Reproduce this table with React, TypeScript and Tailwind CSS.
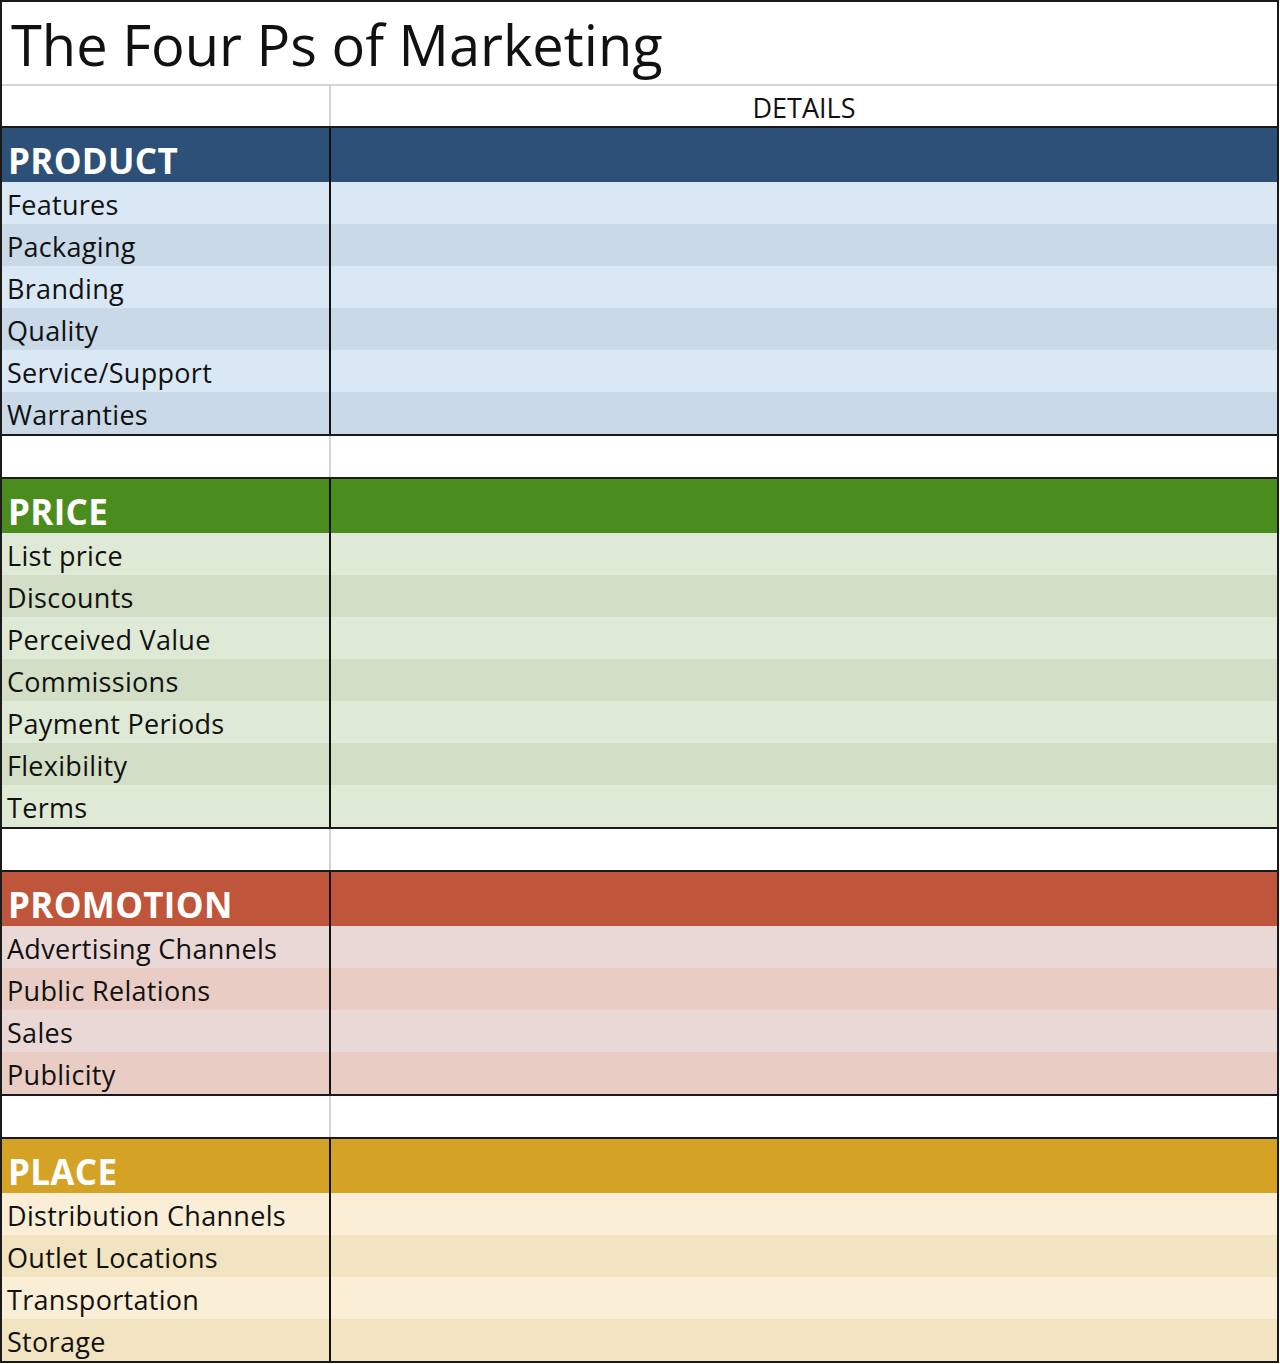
const sections = [
  {
    name: 'PRODUCT',
    head: 'bg-[#2c5077]',
    light: 'bg-[#dae8f5]',
    dark: 'bg-[#c9d9e7]',
    items: ['Features', 'Packaging', 'Branding', 'Quality', 'Service/Support', 'Warranties'],
  },
  {
    name: 'PRICE',
    head: 'bg-[#4a8c1e]',
    light: 'bg-[#dfead6]',
    dark: 'bg-[#d2dfc6]',
    items: ['List price', 'Discounts', 'Perceived Value', 'Commissions', 'Payment Periods', 'Flexibility', 'Terms'],
  },
  {
    name: 'PROMOTION',
    head: 'bg-[#bf553a]',
    light: 'bg-[#ead8d6]',
    dark: 'bg-[#e9ccc3]',
    items: ['Advertising Channels', 'Public Relations', 'Sales', 'Publicity'],
  },
  {
    name: 'PLACE',
    head: 'bg-[#d4a326]',
    light: 'bg-[#fbeed6]',
    dark: 'bg-[#f2e4c0]',
    items: ['Distribution Channels', 'Outlet Locations', 'Transportation', 'Storage'],
  },
]

function BlankRow() {
  return (
    <div className="flex h-[43px] border-t-2 border-[#1a1a1a] bg-white">
      <div className="w-[329px] border-r-2 border-[#d4d4d4]" />
      <div className="flex-1" />
    </div>
  )
}

function Section({ s }: { s: (typeof sections)[number] }) {
  return (
    <div className="border-t-2 border-[#1a1a1a]">
      <div className={`flex h-[54px] ${s.head}`}>
        <div className="flex w-[329px] items-end border-r-2 border-[#111] pb-[4px] pl-[6px] text-[35px] font-bold leading-none tracking-[0.3px] text-white">
          {s.name}
        </div>
        <div className="flex-1" />
      </div>
      {s.items.map((item, i) => (
        <div key={item} className={`flex h-[42px] ${i % 2 === 0 ? s.light : s.dark}`}>
          <div className="flex w-[329px] items-end border-r-2 border-[#111] pb-[6px] pl-[5px] text-[27px] leading-none tracking-[0.3px] text-[#111]">
            {item}
          </div>
          <div className="flex-1" />
        </div>
      ))}
    </div>
  )
}

export default function App() {
  return (
    <div className="w-[1280px] bg-white" style={{ fontFamily: '"Open Sans", Lato, sans-serif' }}>
      <div className="w-[1279px] border-2 border-[#1a1a1a]">
        <div className="flex h-[82px] items-center pl-[9px] pt-[2px] text-[56px] leading-none text-[#111]">
          The Four Ps of Marketing
        </div>
        <div className="flex h-[42px] border-t-2 border-[#d4d4d4] bg-white">
          <div className="w-[329px] border-r-2 border-[#d4d4d4]" />
          <div className="flex flex-1 items-center justify-center pt-[3px] text-[27px] leading-none text-[#111]">
            DETAILS
          </div>
        </div>
        <Section s={sections[0]} />
        <BlankRow />
        <Section s={sections[1]} />
        <BlankRow />
        <Section s={sections[2]} />
        <BlankRow />
        <Section s={sections[3]} />
      </div>
    </div>
  )
}
